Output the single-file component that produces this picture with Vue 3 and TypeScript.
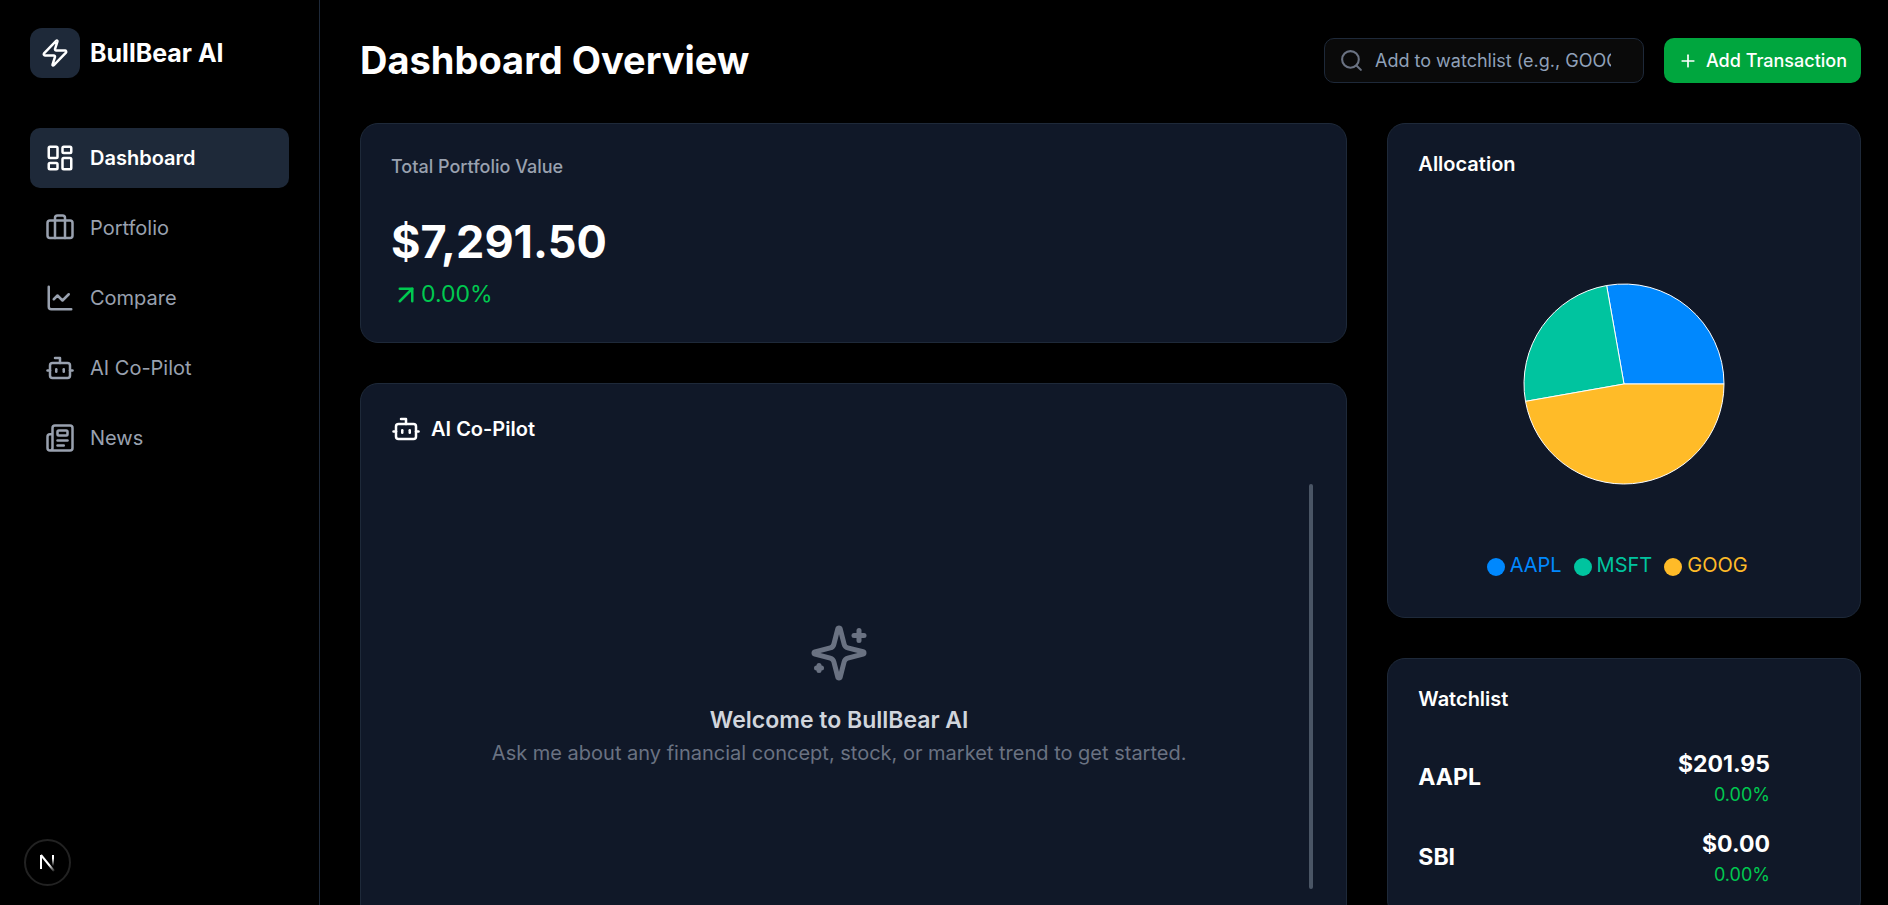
<script setup lang="ts">
import { computed, ref } from 'vue'

interface NavItem {
  label: string
  icon: string[]
}

interface Holding {
  symbol: string
  share: number
  color: string
}

interface Quote {
  symbol: string
  price: string
  change: string
}

const botIcon = ['M12 8V4H8', 'M6 8h12a2 2 0 0 1 2 2v8a2 2 0 0 1-2 2H6a2 2 0 0 1-2-2v-8a2 2 0 0 1 2-2z', 'M2 14h2', 'M20 14h2', 'M15 13v2', 'M9 13v2']

const navItems: NavItem[] = [
  {
    label: 'Dashboard',
    icon: [
      'M4 3h5a1 1 0 0 1 1 1v7a1 1 0 0 1-1 1H4a1 1 0 0 1-1-1V4a1 1 0 0 1 1-1z',
      'M15 3h5a1 1 0 0 1 1 1v3a1 1 0 0 1-1 1h-5a1 1 0 0 1-1-1V4a1 1 0 0 1 1-1z',
      'M15 12h5a1 1 0 0 1 1 1v7a1 1 0 0 1-1 1h-5a1 1 0 0 1-1-1v-7a1 1 0 0 1 1-1z',
      'M4 16h5a1 1 0 0 1 1 1v3a1 1 0 0 1-1 1H4a1 1 0 0 1-1-1v-3a1 1 0 0 1 1-1z',
    ],
  },
  {
    label: 'Portfolio',
    icon: [
      'M16 20V4a2 2 0 0 0-2-2h-4a2 2 0 0 0-2 2v16',
      'M4 6h16a2 2 0 0 1 2 2v10a2 2 0 0 1-2 2H4a2 2 0 0 1-2-2V8a2 2 0 0 1 2-2z',
    ],
  },
  { label: 'Compare', icon: ['M3 3v16a2 2 0 0 0 2 2h16', 'm19 9-5 5-4-4-3 3'] },
  { label: 'AI Co-Pilot', icon: botIcon },
  {
    label: 'News',
    icon: [
      'M15 18h-5',
      'M18 14h-8',
      'M4 22h16a2 2 0 0 0 2-2V4a2 2 0 0 0-2-2H8a2 2 0 0 0-2 2v16a2 2 0 0 1-4 0v-9a2 2 0 0 1 2-2h2',
      'M11 6h6a1 1 0 0 1 1 1v2a1 1 0 0 1-1 1h-6a1 1 0 0 1-1-1V7a1 1 0 0 1 1-1z',
    ],
  },
]

const holdings: Holding[] = [
  { symbol: 'AAPL', share: 100, color: '#0088fe' },
  { symbol: 'MSFT', share: 90, color: '#00c49f' },
  { symbol: 'GOOG', share: 170, color: '#ffbb28' },
]

const watchlist: Quote[] = [
  { symbol: 'AAPL', price: '$201.95', change: '0.00%' },
  { symbol: 'SBI', price: '$0.00', change: '0.00%' },
]

const active = ref('Dashboard')
const query = ref('')

const slices = computed(() => {
  const total = holdings.reduce((sum, h) => sum + h.share, 0)
  const radius = 100
  let angle = 0
  return holdings.map((h) => {
    const start = angle
    angle += (h.share / total) * Math.PI * 2
    const large = angle - start > Math.PI ? 1 : 0
    const x1 = radius * Math.cos(start)
    const y1 = -radius * Math.sin(start)
    const x2 = radius * Math.cos(angle)
    const y2 = -radius * Math.sin(angle)
    return { ...h, path: `M0 0L${x1} ${y1}A${radius} ${radius} 0 ${large} 0 ${x2} ${y2}Z` }
  })
})
</script>

<template>
  <div class="shell">
    <aside class="sidebar">
      <div class="brand">
        <span class="brand-mark">
          <svg class="icon" viewBox="0 0 24 24" aria-hidden="true">
            <path d="M4 14a1 1 0 0 1-.78-1.63l9.9-10.2a.5.5 0 0 1 .86.46l-1.92 6.02A1 1 0 0 0 13 10h7a1 1 0 0 1 .78 1.63l-9.9 10.2a.5.5 0 0 1-.86-.46l1.92-6.02A1 1 0 0 0 11 14z" />
          </svg>
        </span>
        <span class="brand-name">BullBear AI</span>
      </div>
      <nav class="nav" aria-label="Main">
        <a
          v-for="item in navItems"
          :key="item.label"
          href="#"
          class="nav-link"
          :class="{ active: item.label === active }"
          @click.prevent="active = item.label"
        >
          <svg class="icon" viewBox="0 0 24 24" aria-hidden="true">
            <path v-for="d in item.icon" :key="d" :d="d" />
          </svg>
          <span>{{ item.label }}</span>
        </a>
      </nav>
    </aside>

    <main class="main">
      <header class="header">
        <h1>Dashboard Overview</h1>
        <div class="actions">
          <div class="search">
            <svg class="icon search-icon" viewBox="0 0 24 24" aria-hidden="true">
              <circle cx="11" cy="11" r="8" />
              <path d="m21 21-4.3-4.3" />
            </svg>
            <input v-model="query" type="text" aria-label="Add to watchlist" placeholder="Add to watchlist (e.g., GOOGL)" />
          </div>
          <button type="button" class="add-button">
            <svg class="icon plus" viewBox="0 0 24 24" aria-hidden="true"><path d="M5 12h14" /><path d="M12 5v14" /></svg>
            Add Transaction
          </button>
        </div>
      </header>

      <div class="grid">
        <div class="column wide">
          <section class="card">
            <h2 class="muted-title">Total Portfolio Value</h2>
            <p class="total">$7,291.50</p>
            <p class="total-change">
              <svg class="icon arrow" viewBox="0 0 24 24" aria-hidden="true"><path d="M7 7h10v10" /><path d="M7 17 17 7" /></svg>
              <span>0.00%</span>
            </p>
          </section>

          <section class="card">
            <h2 class="copilot-title">
              <svg class="icon" viewBox="0 0 24 24" aria-hidden="true">
                <path v-for="d in botIcon" :key="d" :d="d" />
              </svg>
              AI Co-Pilot
            </h2>
            <div class="chat">
              <svg class="icon sparkles" viewBox="0 0 24 24" aria-hidden="true">
                <path d="M9.937 15.5A2 2 0 0 0 8.5 14.063l-6.135-1.582a.5.5 0 0 1 0-.962L8.5 9.936A2 2 0 0 0 9.937 8.5l1.582-6.135a.5.5 0 0 1 .963 0L14.063 8.5A2 2 0 0 0 15.5 9.937l6.135 1.581a.5.5 0 0 1 0 .964L15.5 14.063a2 2 0 0 0-1.437 1.437l-1.582 6.135a.5.5 0 0 1-.963 0z" />
                <path d="M20 3v4" />
                <path d="M22 5h-4" />
                <path d="M4 17v2" />
                <path d="M5 18H3" />
              </svg>
              <h3>Welcome to BullBear AI</h3>
              <p>Ask me about any financial concept, stock, or market trend to get started.</p>
              <span class="chat-thumb" aria-hidden="true"></span>
            </div>
          </section>
        </div>

        <div class="column">
          <section class="card">
            <h2 class="card-title">Allocation</h2>
            <svg class="pie" viewBox="-101 -101 202 202" role="img" aria-label="Allocation by holding">
              <path v-for="s in slices" :key="s.symbol" :d="s.path" :fill="s.color" />
            </svg>
            <ul class="legend">
              <li v-for="h in holdings" :key="h.symbol" :style="{ color: h.color }">
                <svg class="dot" viewBox="0 0 18 18" aria-hidden="true"><circle cx="9" cy="9" r="9" /></svg>
                <span>{{ h.symbol }}</span>
              </li>
            </ul>
          </section>

          <section class="card">
            <h2 class="card-title">Watchlist</h2>
            <ul class="watchlist">
              <li v-for="q in watchlist" :key="q.symbol">
                <span class="symbol">{{ q.symbol }}</span>
                <span class="quote">
                  <span class="price">{{ q.price }}</span>
                  <span class="change">{{ q.change }}</span>
                </span>
              </li>
            </ul>
          </section>
        </div>
      </div>
    </main>

    <button type="button" class="dev-badge" aria-label="Open developer tools">
      <svg viewBox="0 0 24 24" aria-hidden="true">
        <defs>
          <linearGradient id="stem" x1="0" y1="4" x2="0" y2="15" gradientUnits="userSpaceOnUse">
            <stop offset="0.3" stop-color="#fff" />
            <stop offset="1" stop-color="#fff" stop-opacity="0" />
          </linearGradient>
          <linearGradient id="diagonal" x1="13" y1="14" x2="19" y2="21" gradientUnits="userSpaceOnUse">
            <stop offset="0" stop-color="#fff" />
            <stop offset="1" stop-color="#fff" stop-opacity="0" />
          </linearGradient>
        </defs>
        <path d="M5 18V4" stroke="#fff" />
        <path d="M5 4 18 20" stroke="url(#diagonal)" />
        <rect x="16" y="4" width="2" height="11" fill="url(#stem)" />
      </svg>
    </button>
  </div>
</template>

<style>
body {
  margin: 0;
  background: #000;
}
</style>

<style scoped>
.shell {
  display: flex;
  height: 100vh;
  background: #000;
  color: #fff;
  font-family: Inter, 'Liberation Sans', sans-serif;
  font-size: 20px;
  line-height: 30px;
}

.shell *,
.shell *::before {
  box-sizing: border-box;
}

h1,
h2,
h3,
p,
ul {
  margin: 0;
  padding: 0;
  list-style: none;
}

.icon {
  flex: none;
  width: 30px;
  height: 30px;
  fill: none;
  stroke: currentColor;
  stroke-width: 2;
  stroke-linecap: round;
  stroke-linejoin: round;
}

.sidebar {
  flex: none;
  width: 320px;
  padding: 28px 30px;
  border-right: 1px solid #1e2939;
}

.brand {
  display: flex;
  align-items: center;
  gap: 10px;
  margin-bottom: 50px;
}

.brand-mark {
  display: grid;
  place-items: center;
  width: 50px;
  height: 50px;
  border-radius: 12px;
  background: #1e2939;
}

.brand-name {
  font-size: 25px;
  font-weight: 700;
}

.nav {
  display: flex;
  flex-direction: column;
  gap: 10px;
}

.nav-link {
  display: flex;
  align-items: center;
  gap: 15px;
  padding: 15px;
  border-radius: 10px;
  color: #99a1af;
  text-decoration: none;
}

.nav-link.active {
  background: #1e2939;
  color: #fff;
  font-weight: 600;
}

.main {
  flex: 1;
  min-width: 0;
  padding: 38px 27px 40px 40px;
  overflow-y: auto;
  scrollbar-width: none;
}

.header {
  display: flex;
  align-items: center;
  justify-content: space-between;
  margin-bottom: 40px;
}

h1 {
  font-size: 38px;
  font-weight: 700;
  line-height: 45px;
}

.actions {
  display: flex;
  gap: 20px;
}

.search {
  display: flex;
  align-items: center;
  gap: 11px;
  width: 320px;
  height: 45px;
  padding: 0 32px 0 14px;
  border: 1px solid #1e2939;
  border-radius: 10px;
  background: #0a0a0a;
}

.search-icon {
  width: 25px;
  height: 25px;
  color: #6a7282;
}

.search input {
  flex: 1;
  min-width: 0;
  padding: 0;
  border: 0;
  outline: 0;
  background: transparent;
  color: #fff;
  font: inherit;
  font-size: 18px;
}

.search input::placeholder {
  color: #90a1b9;
}

.add-button {
  display: flex;
  align-items: center;
  gap: 8px;
  height: 45px;
  padding: 0 14px;
  border: 0;
  border-radius: 10px;
  background: #00a63e;
  color: #fff;
  font: inherit;
  font-size: 18px;
  font-weight: 500;
}

.plus {
  width: 20px;
  height: 20px;
}

.grid {
  display: grid;
  grid-template-columns: repeat(3, minmax(0, 1fr));
  gap: 40px;
  align-items: start;
}

.column {
  display: flex;
  flex-direction: column;
  gap: 40px;
}

.wide {
  grid-column: span 2;
}

.card {
  padding: 30px;
  border: 1px solid #1e2939;
  border-radius: 18px;
  background: #101828;
}

.muted-title {
  margin-bottom: 38px;
  color: #99a1af;
  font-size: 18px;
  font-weight: 500;
  line-height: 25px;
}

.total {
  font-size: 45px;
  font-weight: 700;
  line-height: 50px;
}

.total-change {
  display: flex;
  align-items: center;
  margin-top: 10px;
  color: #00c950;
  font-size: 23px;
  line-height: 35px;
}

.copilot-title {
  display: flex;
  align-items: center;
  gap: 10px;
  margin-bottom: 30px;
  font-size: 20px;
  font-weight: 600;
}

.chat {
  position: relative;
  display: flex;
  flex-direction: column;
  align-items: center;
  justify-content: center;
  height: 443px;
  padding-right: 29px;
  text-align: center;
}

.sparkles {
  width: 60px;
  height: 60px;
  margin-bottom: 20px;
  color: #6a7282;
}

.chat h3 {
  color: #d1d5dc;
  font-size: 23px;
  font-weight: 600;
  line-height: 35px;
}

.chat p {
  color: #6a7282;
}

.chat-thumb {
  position: absolute;
  top: 10px;
  right: 3px;
  width: 4px;
  height: 405px;
  border-radius: 2px;
  background: #4a5565;
}

.card-title {
  font-size: 20px;
  font-weight: 600;
  line-height: 20px;
}

.pie {
  display: block;
  width: 202px;
  height: 202px;
  margin: 109px auto 65px;
  stroke: #fff;
  stroke-width: 1;
}

.legend {
  display: flex;
  justify-content: center;
  gap: 12px;
  padding-right: 14px;
  margin-bottom: 7px;
}

.legend li {
  white-space: nowrap;
}

.dot {
  width: 18px;
  height: 18px;
  margin-right: 5px;
  vertical-align: middle;
  fill: currentColor;
}

.watchlist {
  display: flex;
  flex-direction: column;
  gap: 20px;
  margin-top: 38px;
}

.watchlist li {
  display: flex;
  align-items: center;
  justify-content: space-between;
  padding-right: 60px;
}

.symbol,
.price {
  font-size: 23px;
  font-weight: 700;
  line-height: 35px;
}

.quote {
  display: flex;
  flex-direction: column;
  align-items: flex-end;
}

.change {
  color: #00c950;
  font-size: 18px;
  line-height: 25px;
}

.dev-badge {
  position: fixed;
  left: 24px;
  bottom: 19px;
  display: grid;
  place-items: center;
  width: 47px;
  height: 47px;
  padding: 0;
  border: 2px solid #222;
  border-radius: 50%;
  background: #000;
}

.dev-badge svg {
  width: 24px;
  height: 24px;
  fill: none;
  stroke-width: 2;
}
</style>
